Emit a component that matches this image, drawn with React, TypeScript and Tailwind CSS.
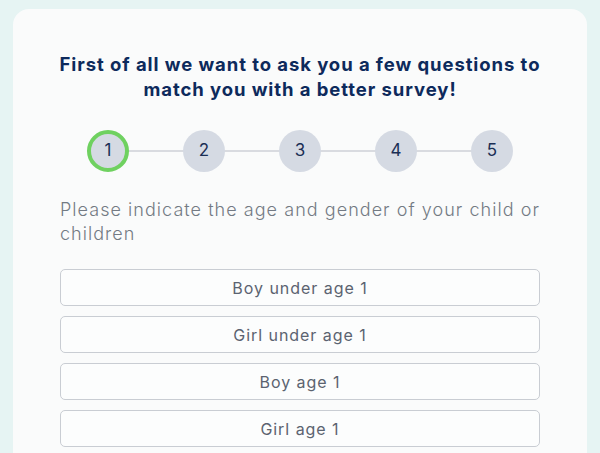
const steps = [1, 2, 3, 4, 5];
const options = ['Boy under age 1', 'Girl under age 1', 'Boy age 1', 'Girl age 1'];

export default function App() {
  return (
    <div className="h-[453px] overflow-hidden bg-[#e6f4f3] px-[13px] pt-[9px] font-['Inter',sans-serif]">
      <div className="h-[460px] rounded-t-[16px] bg-[#fafbfb] px-[47px] pt-[43px] pb-6">
        {/* Heading */}
        <h1 className="-mx-[20px] whitespace-nowrap text-center text-[18.5px] leading-[25px] font-bold tracking-[0.05em] text-[#0d2a5c]">
          First of all we want to ask you a few questions to
          <br />
          match you with a better survey!
        </h1>

        {/* Steps */}
        <div className="relative mx-auto mt-[28px] flex w-[426px] items-center justify-between">
          <div className="absolute left-4 right-4 top-1/2 h-[2px] -translate-y-1/2 bg-[#d9dbe0]" />
          {steps.map((n) => (
            <div
              key={n}
              className={
                n === 1
                  ? 'relative z-10 flex h-[42px] w-[42px] items-center justify-center rounded-full border-[4px] border-[#6fd160] bg-[#d5dae3] text-[17px] font-normal text-[#1b2f55]'
                  : 'relative z-10 flex h-[42px] w-[42px] items-center justify-center rounded-full bg-[#d5dae3] text-[17px] font-normal text-[#1b2f55]'
              }
            >
              {n}
            </div>
          ))}
        </div>

        {/* Question */}
        <p className="-mr-[20px] mt-[26px] text-[18px] leading-[24px] font-light tracking-[0.058em] text-[#737a83]">
          Please indicate the age and gender of your child or children
        </p>

        {/* Options */}
        <div className="mt-[23px] flex flex-col gap-[10px]">
          {options.map((o) => (
            <button
              key={o}
              className="h-[37px] w-full rounded-[5px] border border-[#c9cdd3] bg-[#fcfdfd] text-[16px] tracking-[0.06em] text-[#5b6370]"
            >
              {o}
            </button>
          ))}
        </div>
      </div>
    </div>
  );
}
